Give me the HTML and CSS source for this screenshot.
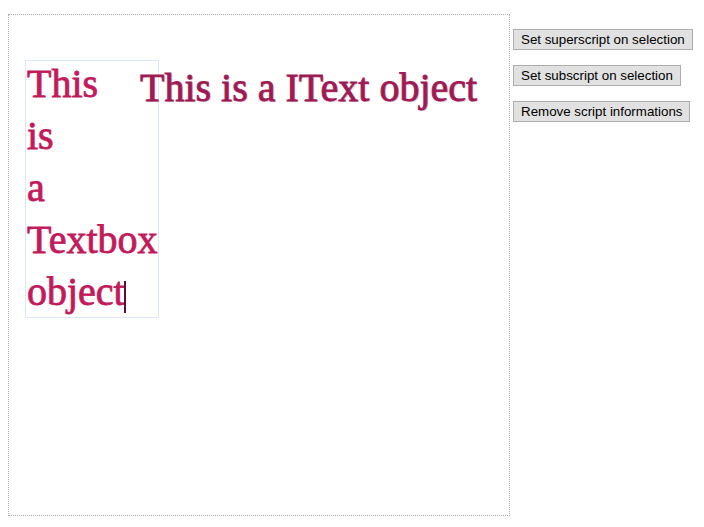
FILE: index.html
```html
<!DOCTYPE html>
<html>
<head>
<meta charset="utf-8">
<link rel="stylesheet" href="styles.css">
</head>
<body>
<div class="page">
  <div class="canvas">
    <div class="textbox">
      <div class="tb-text">This<br>is<br>a<br>Textbox<br>object<span class="cursor"></span></div>
    </div>
    <div class="itext">This is a IText object</div>
  </div>
  <div class="controls">
    <button class="btn">Set superscript on selection</button>
    <button class="btn">Set subscript on selection</button>
    <button class="btn">Remove script informations</button>
  </div>
</div>
</body>
</html>
```
FILE: styles.css
```css
html, body {
  background: #ffffff;
}
body {
  margin: 8px;
}
.page {
  display: flex;
  align-items: flex-start;
}
.canvas {
  position: relative;
  width: 500px;
  height: 500px;
  margin-top: 6px;
  border: 1px dotted #aaaaaa;
  flex: none;
}
.textbox {
  position: absolute;
  left: 16px;
  top: 45px;
  width: 132px;
  height: 256px;
  border: 1px solid #dbe7f4;
}
.tb-text {
  margin-top: -3px;
  padding-left: 1px;
  font-family: "Liberation Serif", "Times New Roman", serif;
  font-size: 40px;
  line-height: 52px;
  color: #c5195c;
  -webkit-text-stroke: 0.8px #c01a5a;
  white-space: nowrap;
}
.cursor {
  display: inline-block;
  width: 2px;
  height: 32px;
  background: #5a1030;
  vertical-align: -8px;
  margin-left: -1px;
  -webkit-text-stroke: 0;
}
.itext {
  position: absolute;
  left: 131px;
  top: 53px;
  font-family: "Liberation Serif", "Times New Roman", serif;
  font-size: 40px;
  line-height: 40px;
  color: #9f1a55;
  -webkit-text-stroke: 0.8px #a01a56;
  white-space: nowrap;
  text-shadow: 1px 1px 1px rgba(90, 10, 40, 0.3);
}
.controls {
  display: flex;
  flex-direction: column;
  align-items: flex-start;
  gap: 15px;
  margin-left: 3px;
  padding-top: 21px;
}
.btn {
  font-family: "Liberation Sans", Arial, sans-serif;
  font-size: 13.33px;
  color: #000000;
  height: 21px;
  padding: 0 7px;
  background: #e1e1e1;
  border: 1px solid #adadad;
  border-radius: 0;
  white-space: nowrap;
}
```
